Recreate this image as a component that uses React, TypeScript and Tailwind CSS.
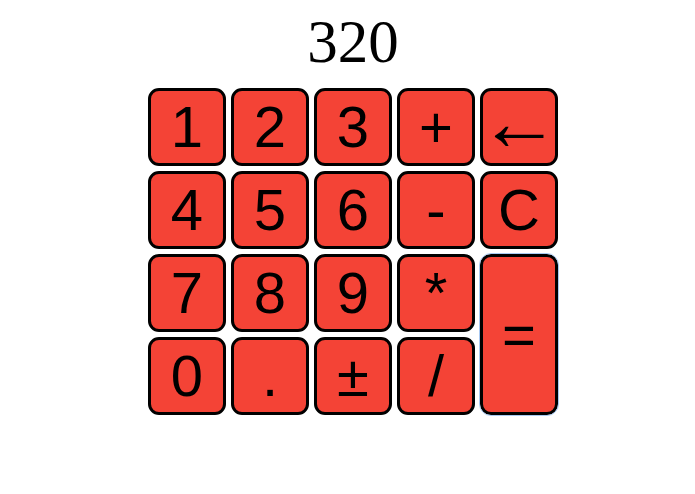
const keys: { label: string; tall?: boolean }[] = [
  { label: '1' },
  { label: '2' },
  { label: '3' },
  { label: '+' },
  { label: '←' },
  { label: '4' },
  { label: '5' },
  { label: '6' },
  { label: '-' },
  { label: 'C' },
  { label: '7' },
  { label: '8' },
  { label: '9' },
  { label: '*' },
  { label: '=', tall: true },
  { label: '0' },
  { label: '.' },
  { label: '±' },
  { label: '/' },
];

export default function App() {
  return (
    <div className="w-[695px] h-[494px] bg-white flex flex-col items-center pl-[11px]">
      <div className="mt-[9px] text-[61px] leading-[66px] text-black font-['Liberation_Serif',serif]">
        320
      </div>
      <div className="mt-[13px] grid grid-cols-[repeat(5,78px)] grid-rows-[repeat(4,78px)] gap-[5px]">
        {keys.map((k) => (
          <button
            key={k.label}
            className={`flex items-center justify-center bg-[#f44336] border-[3.5px] border-black rounded-[11px] text-black leading-none ${
              k.label === '←'
                ? "text-[82px] pb-[8px] font-['Liberation_Serif',serif]"
                : "text-[58px] font-['Liberation_Sans',Arial,sans-serif]"
            } ${k.tall ? 'row-span-2 outline outline-1 outline-[#a9c9f2]' : ''}`}
          >
            {k.label}
          </button>
        ))}
      </div>
    </div>
  );
}
